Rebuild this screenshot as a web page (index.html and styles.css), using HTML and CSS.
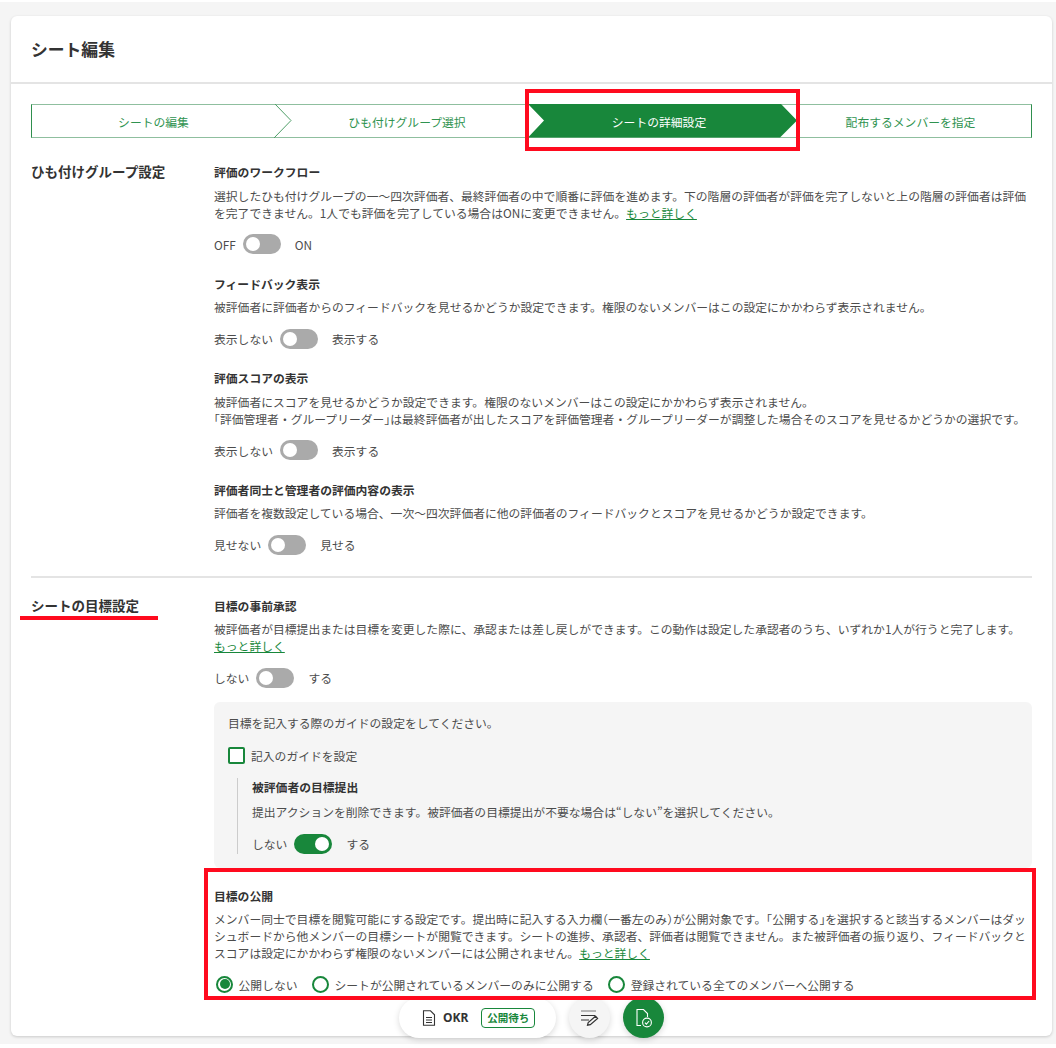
FILE: index.html
```html
<!DOCTYPE html>
<html lang="ja">
<head>
  <meta charset="UTF-8" />
  <title>シート編集</title>
  <link rel="stylesheet" href="styles.css">
</head>
<body>
  <div class="page">
    <div class="card">
      <div class="card-header"><h1>シート編集</h1></div>

      <div class="steps">
        <div class="step step-1">シートの編集
          <svg class="chevron" width="18" height="34" viewBox="0 0 18 34"><path d="M1 0 L17 16.5 L0 34" fill="#fff" stroke="#4f9e68" stroke-width="1"/></svg>
        </div>
        <div class="step step-2">ひも付けグループ選択</div>
        <div class="step step-3">
          <svg class="arrow" width="270" height="34" viewBox="0 0 270 34"><path d="M0 0 H253 L269 16.5 L252 33.5 H0 L16 16.5 Z" fill="#18873b"/></svg>
          <span>シートの詳細設定</span>
        </div>
        <div class="step step-4">配布するメンバーを指定</div>
      </div>

      <div class="section">
        <h2 class="section-title">ひも付けグループ設定</h2>
        <div class="section-body">
          <div class="item">
            <h3>評価のワークフロー</h3>
            <p>選択したひも付けグループの一〜四次評価者、最終評価者の中で順番に評価を進めます。下の階層の評価者が評価を完了しないと上の階層の評価者は評価を完了できません。1人でも評価を完了している場合はONに変更できません。<a href="#">もっと詳しく</a></p>
            <div class="toggle-row"><span>OFF</span><i class="toggle"></i><span class="after">ON</span></div>
          </div>
          <div class="item">
            <h3>フィードバック表示</h3>
            <p>被評価者に評価者からのフィードバックを見せるかどうか設定できます。権限のないメンバーはこの設定にかかわらず表示されません。</p>
            <div class="toggle-row"><span>表示しない</span><i class="toggle"></i><span class="after">表示する</span></div>
          </div>
          <div class="item">
            <h3>評価スコアの表示</h3>
            <p>被評価者にスコアを見せるかどうか設定できます。権限のないメンバーはこの設定にかかわらず表示されません。<br><span class="half">「</span>評価管理者・グループリーダー<span class="half">」</span>は最終評価者が出したスコアを評価管理者・グループリーダーが調整した場合そのスコアを見せるかどうかの選択です。</p>
            <div class="toggle-row"><span>表示しない</span><i class="toggle"></i><span class="after">表示する</span></div>
          </div>
          <div class="item">
            <h3>評価者同士と管理者の評価内容の表示</h3>
            <p>評価者を複数設定している場合、一次〜四次評価者に他の評価者のフィードバックとスコアを見せるかどうか設定できます。</p>
            <div class="toggle-row"><span>見せない</span><i class="toggle"></i><span class="after">見せる</span></div>
          </div>
        </div>
      </div>

      <hr class="divider">

      <div class="section section-goal">
        <h2 class="section-title">シートの目標設定</h2>
        <div class="section-body">
          <div class="item item-approval">
            <h3>目標の事前承認</h3>
            <p>被評価者が目標提出または目標を変更した際に、承認または差し戻しができます。この動作は設定した承認者のうち、いずれか1人が行うと完了します。<br><a href="#">もっと詳しく</a></p>
            <div class="toggle-row"><span>しない</span><i class="toggle"></i><span class="after">する</span></div>
          </div>
          <div class="guide-box">
            <p>目標を記入する際のガイドの設定をしてください。</p>
            <label class="check"><i class="checkbox"></i>記入のガイドを設定</label>
            <div class="guide-sub">
              <h3>被評価者の目標提出</h3>
              <p>提出アクションを削除できます。被評価者の目標提出が不要な場合は“しない”を選択してください。</p>
              <div class="toggle-row"><span>しない</span><i class="toggle on"></i><span class="after">する</span></div>
            </div>
          </div>
          <div class="item item-public">
            <h3>目標の公開</h3>
            <p>メンバー同士で目標を閲覧可能にする設定です。提出時に記入する入力欄<span class="half">（</span>一番左のみ<span class="half">）</span>が公開対象です。<span class="half">「</span>公開する<span class="half">」</span>を選択すると該当するメンバーはダッシュボードから他メンバーの目標シートが閲覧できます。シートの進捗、承認者、評価者は閲覧できません。また被評価者の振り返り、フィードバックとスコアは設定にかかわらず権限のないメンバーには公開されません。<a href="#">もっと詳しく</a></p>
            <div class="radios">
              <label><i class="radio on"></i>公開しない</label>
              <label><i class="radio"></i>シートが公開されているメンバーのみに公開する</label>
              <label><i class="radio"></i>登録されている全てのメンバーへ公開する</label>
            </div>
          </div>
        </div>
      </div>
    </div>

    <!-- floating action bar -->
    <div class="float-bar">
      <div class="float-pill">
        <svg width="14" height="16" viewBox="0 0 14 16" fill="none" stroke="#333" stroke-width="1.1"><path d="M1.5 .8 H8.5 L12.5 4.8 V15.2 H1.5 Z"/><path d="M4 7.5 H10 M4 10 H10 M4 12.5 H10"/></svg>
        <b>OKR</b>
        <span class="badge">公開待ち</span>
      </div>
      <div class="float-btn">
        <svg width="18" height="16" viewBox="0 0 18 16" fill="none" stroke="#333" stroke-width="1"><path d="M0 1 H15" stroke="#777"/><path d="M0 5.5 H14 M0 10 H8"/><path d="M6.5 15.2 L7.2 12.5 L14.5 6.2 L16.6 8.4 L9.3 14.6 Z" stroke-width="1.2"/></svg>
      </div>
      <div class="float-btn green">
        <svg width="18" height="20" viewBox="0 0 18 20" fill="none" stroke="#fff" stroke-width="1.1"><path d="M6 17.5 H2 V1.5 H8.5 L12.5 5.5 V9"/><circle cx="12" cy="14.5" r="4.4"/><path d="M9.9 14.6 L11.4 16.1 L14.1 13"/></svg>
      </div>
    </div>

    <!-- red marks on the screenshot -->
    <div class="mark mark-step"></div>
    <div class="mark mark-public"></div>
    <div class="mark-line"></div>
  </div>
</body>
</html>
```

FILE: styles.css
```css
* { box-sizing: border-box; }
html, body {
  margin: 0;
  padding: 0;
  background: #fff;
}
body {
  font-family: "Noto Sans CJK JP", "Noto Sans", sans-serif;
  font-size: 11.8px;
  line-height: 17px;
  color: #4c4c4c;
}
.half { font-feature-settings: "halt"; }
.page {
  position: relative;
  height: 1048px;
  overflow: hidden;
}
.page::before {
  content: "";
  position: absolute;
  left: 0; right: 0; top: 2px; height: 1042px;
  background: #f5f5f5;
}
.card {
  position: relative;
  margin: 14px 0 0 0;
  top: 2px;
  margin-left: 11px;
  width: 1041px;
  height: 1020px;
  background: #fff;
  border-radius: 6px;
  box-shadow: 0 1px 3px rgba(0,0,0,0.18);
  overflow: hidden;
}
.card-header {
  height: 68px;
  padding: 0 20px;
  display: flex;
  align-items: center;
  border-bottom: 2px solid #e4e4e4;
}
.card-header h1 {
  margin: 0;
  font-size: 16.8px;
  font-weight: 700;
  color: #333;
}

/* steps */
.steps {
  display: flex;
  margin: 20px 20px 0;
  height: 34px;
  border: 1px solid #8fbf9f;
  border-left-color: #2f8f4e;
  border-right-color: #2f8f4e;
  color: #2f9350;
  background: #fff;
}
.step {
  position: relative;
  display: flex;
  align-items: center;
  justify-content: center;
  height: 32px;
}
.step-1 { width: 243px; }
.step-2 { width: 264px; }
.step-3 { width: 240px; color: #fff; }
.step-4 { flex: 1; padding-left: 11px; }
.step-3 span { position: relative; }
.chevron {
  position: absolute;
  right: -17px;
  top: -1px;
}
.arrow {
  position: absolute;
  left: -11px;
  top: -1px;
}

/* sections */
.section {
  display: flex;
  margin: 0 20px;
}
.section-title {
  width: 183px;
  flex: none;
  margin: 0;
  font-size: 13.5px;
  line-height: 17px;
  font-weight: 700;
  color: #333;
}
.section-body { flex: 1; min-width: 0; }
.steps + .section { margin-top: 25px; }
.item { margin-bottom: 20.5px; }
.item h3, .guide-sub h3 {
  margin: 0 0 6.5px;
  font-size: 11.8px;
  line-height: 17px;
  font-weight: 700;
  color: #333;
}
.item p, .guide-box p {
  margin: 0;
}
.item a {
  color: #18873b;
  text-decoration: underline;
}
.toggle-row {
  display: flex;
  align-items: center;
  height: 20px;
  margin-top: 13.5px;
}
.toggle {
  position: relative;
  width: 38px;
  height: 20px;
  margin-left: 7px;
  border-radius: 10px;
  background: #aaa;
}
.toggle::after {
  content: "";
  position: absolute;
  left: 3px; top: 3px;
  width: 14px; height: 14px;
  border-radius: 50%;
  background: #fff;
}
.toggle.on { background: #18873b; }
.toggle.on::after { left: 21px; }
.after { margin-left: 14px; }
.divider {
  margin: 1px 20px 0;
  border: 0;
  border-top: 2px solid #e4e4e4;
}
.section-goal { margin-top: 18.5px; }
.item-approval { margin-bottom: 14.5px; }

/* guide */
.guide-box {
  background: #f5f5f5;
  border-radius: 6px;
  padding: 12px 14px;
  height: 166px;
}
.check {
  display: flex;
  align-items: center;
  gap: 6px;
  margin-top: 15.5px;
  height: 18px;
}
.checkbox {
  width: 17px;
  height: 17px;
  border: 2px solid #18873b;
  border-radius: 2px;
  background: #fff;
}
.guide-sub {
  margin: 13px 0 0 9px;
  padding-left: 14px;
  border-left: 1px solid #ccc;
}
.guide-sub h3 { margin-bottom: 8px; }
.guide-sub .toggle-row { margin-top: 14px; }
.item-public { margin-top: 19px; margin-bottom: 0; }
.item-public h3 { margin-bottom: 6px; }
.radios {
  display: flex;
  gap: 14.5px;
  margin-top: 14px;
}
.radios label {
  display: flex;
  align-items: center;
  gap: 5.5px;
  height: 18px;
}
.radios label:first-child { margin-left: 2px; }
.radio {
  position: relative;
  width: 17px;
  height: 17px;
  border: 2px solid #18873b;
  border-radius: 50%;
  background: #fff;
}
.radio.on::after {
  content: "";
  position: absolute;
  left: 1.5px; top: 1.5px;
  width: 10px; height: 10px;
  border-radius: 50%;
  background: #18873b;
}

/* floating bar */
.float-bar {
  position: absolute;
  left: 399px;
  top: 997px;
  display: flex;
  align-items: center;
  gap: 13px;
}
.float-pill {
  display: flex;
  align-items: center;
  width: 157px;
  height: 40px;
  padding-left: 23px;
  background: #fff;
  border-radius: 20px;
  box-shadow: 0 2px 6px rgba(0,0,0,0.15);
}
.float-pill b {
  margin-left: 7px;
  font-family: "Noto Sans", sans-serif;
  font-size: 12px;
  color: #333;
}
.badge {
  margin-left: 13px;
  padding: 0 5px;
  height: 20px;
  line-height: 18px;
  font-size: 10.5px;
  font-weight: 700;
  color: #18873b;
  border: 1px solid #18873b;
  border-radius: 4px;
}
.float-btn {
  display: flex;
  align-items: center;
  justify-content: center;
  width: 41px;
  height: 41px;
  border-radius: 50%;
  background: #f5f5f5;
  box-shadow: 0 2px 6px rgba(0,0,0,0.15);
}
.float-btn.green { background: #18873b; }

/* red marks */
.mark {
  position: absolute;
  border: 4px solid #ff0a1e;
}
.mark-step { left: 525px; top: 89px; width: 275px; height: 62px; }
.mark-public { left: 204px; top: 868px; width: 832px; height: 132px; }
.mark-line {
  position: absolute;
  left: 20px; top: 616px;
  width: 138px; height: 4px;
  background: #ff0a1e;
}
```
